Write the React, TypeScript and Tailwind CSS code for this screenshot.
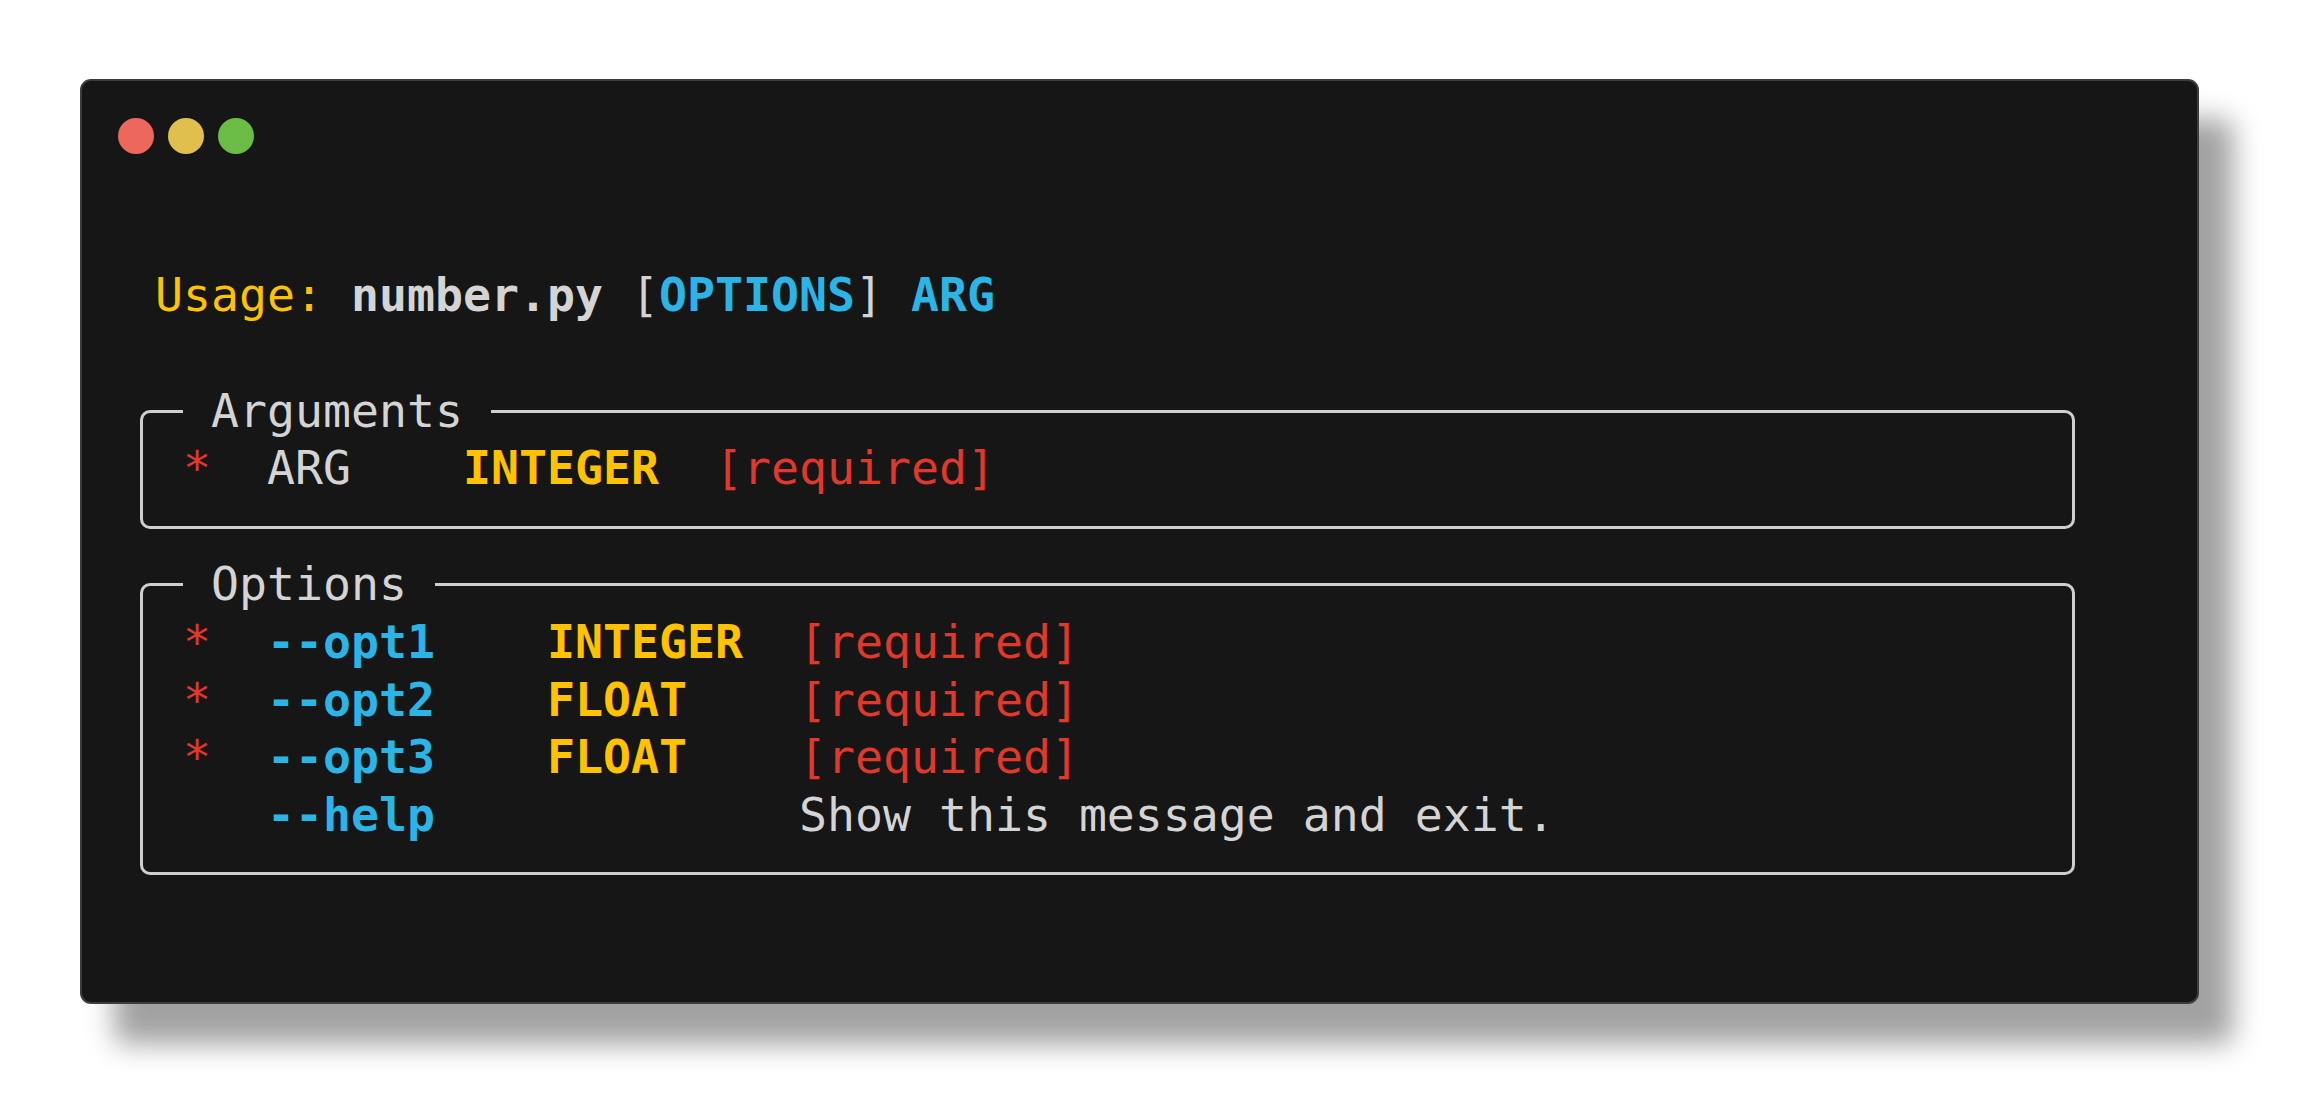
type Seg = { t: string; c?: string; b?: boolean };

const FG = "text-[#d4d4d4]";
const YEL = "text-[#fec200]";
const CYAN = "text-[#2ab5e6]";
const RED = "text-[#e0392b]";

const argRows: Seg[][] = [
    [
        { t: " " },
        { t: "*", c: RED },
        { t: "  " },
        { t: "ARG", c: FG },
        { t: "    " },
        { t: "INTEGER", c: YEL, b: true },
        { t: "  " },
        { t: "[required]", c: RED },
    ],
];

const optRows: Seg[][] = [
    [
        { t: " " },
        { t: "*", c: RED },
        { t: "  " },
        { t: "--opt1", c: CYAN, b: true },
        { t: "    " },
        { t: "INTEGER", c: YEL, b: true },
        { t: "  " },
        { t: "[required]", c: RED },
    ],
    [
        { t: " " },
        { t: "*", c: RED },
        { t: "  " },
        { t: "--opt2", c: CYAN, b: true },
        { t: "    " },
        { t: "FLOAT", c: YEL, b: true },
        { t: "    " },
        { t: "[required]", c: RED },
    ],
    [
        { t: " " },
        { t: "*", c: RED },
        { t: "  " },
        { t: "--opt3", c: CYAN, b: true },
        { t: "    " },
        { t: "FLOAT", c: YEL, b: true },
        { t: "    " },
        { t: "[required]", c: RED },
    ],
    [
        { t: "    " },
        { t: "--help", c: CYAN, b: true },
        { t: "             " },
        { t: "Show this message and exit.", c: FG },
    ],
];

function Line({ segs }: { segs: Seg[] }) {
    return (
        <div className="h-[57.8px] whitespace-pre">
            {segs.map((s, i) => (
                <span key={i} className={`${s.c ?? FG} ${s.b ? "font-bold" : "font-normal"}`}>
                    {s.t}
                </span>
            ))}
        </div>
    );
}

function Panel({ title, rows, className = "" }: { title: string; rows: Seg[][]; className?: string }) {
    return (
        <fieldset
            className={`ml-[12.5px] w-[1935px] rounded-[10px] border-[3px] border-[#cfcfcf] pl-[12.5px] pb-[27.4px] ${className}`}
        >
            <legend className="ml-[28px] px-[28px] leading-[57.8px] text-[#d4d4d4]">{title}</legend>
            {rows.map((r, i) => (
                <Line key={i} segs={r} />
            ))}
        </fieldset>
    );
}

export default function App() {
    return (
        <div className="min-h-[1116px] w-full bg-white pl-[80px] pt-[79px]">
            {/* terminal window */}
            <div className="w-[2119px] h-[925px] rounded-[11px] border-2 border-[#3c3c3c] bg-[#161616] shadow-[34px_40px_28px_rgba(0,0,0,0.37)]">
                {/* traffic lights */}
                <div className="flex gap-[14px] pl-[36px] pt-[37px]">
                    <span className="block size-[36px] rounded-full bg-[#ee675c]"></span>
                    <span className="block size-[36px] rounded-full bg-[#e0bf4c]"></span>
                    <span className="block size-[36px] rounded-full bg-[#6cbd45]"></span>
                </div>

                {/* help output */}
                <div className="pl-[45px] pt-[113px] font-['DejaVu_Sans_Mono',monospace] text-[46.5px] leading-[57.8px]">
                    <Line
                        segs={[
                            { t: " " },
                            { t: "Usage:", c: YEL },
                            { t: " " },
                            { t: "number.py", c: FG, b: true },
                            { t: " [" },
                            { t: "OPTIONS", c: CYAN, b: true },
                            { t: "] " },
                            { t: "ARG", c: CYAN, b: true },
                        ]}
                    />
                    <Panel title="Arguments" rows={argRows} className="mt-[57.8px]" />
                    <Panel title="Options" rows={optRows} className="mt-[27.4px]" />
                </div>
            </div>
        </div>
    );
}
